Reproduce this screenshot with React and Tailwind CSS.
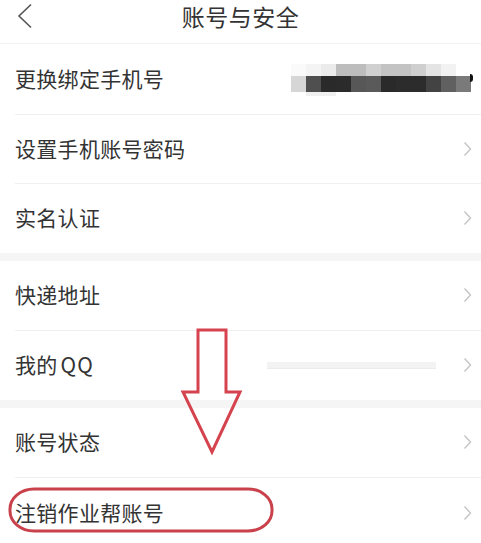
import React from "react";

const Chevron = () => (
  <svg width="9" height="16" viewBox="0 0 9 16" className="shrink-0">
    <path d="M1.5 1.5 L7.5 8 L1.5 14.5" fill="none" stroke="#c4c4c4" strokeWidth="1.4" />
  </svg>
);

const topRow = ["#fafafa", "#f4f4f4", "#ebebeb", "#bdbdbd", "#bdbdbd", "#d0d0d0", "#c3c3c3", "#c3c3c3", "#cfcfcf", "#e4e4e4", "#f2f2f2", "#ffffff"];
const botRow = ["#d6d6d6", "#4f4f4f", "#2a2a2a", "#2b2b2b", "#575757", "#5a5a5a", "#2a2a2a", "#2c2c2c", "#2c2c2c", "#434343", "#606060", "#7a7a7a"];

const Blur = () => (
  <div className="flex flex-col">
    <div className="flex">
      {topRow.map((c, i) => (
        <div key={i} className="w-[15px] h-[12px]" style={{ background: c }} />
      ))}
    </div>
    <div className="flex">
      {botRow.map((c, i) => (
        <div key={i} className="w-[15px] h-[16px]" style={{ background: c }} />
      ))}
    </div>
    <div className="flex">
      <div className="w-[15px] h-[4px]" />
      <div className="w-[30px] h-[4px] bg-[#f0f0f0]" />
    </div>
  </div>
);

const Row = ({ label, border = true, h = "h-[70px]", right = null, chevron = true }) => (
  <div className={`${h} pl-[15px] bg-white`}>
    <div className={`h-full flex items-center pr-[9px] pb-[1px] ${border ? "border-b border-[#f0f0f0]" : ""}`}>
      <span className="text-[21px] text-[#333333] tracking-[0.3px] flex-1">{label}</span>
      {right}
      {chevron && <Chevron />}
    </div>
  </div>
);

export default function App() {
  return (
    <div
      className="relative w-[481px] h-[543px] overflow-hidden bg-white"
      style={{ fontFamily: '"Noto Sans CJK SC", "Noto Sans", sans-serif' }}
    >
      <div className="h-[44px] border-b border-[#f2f2f2] flex items-start relative">
        <svg width="16" height="26" viewBox="0 0 16 26" className="absolute left-[17px] top-[3px]">
          <path d="M14 1.5 L2 13 L14 24.5" fill="none" stroke="#555555" strokeWidth="1.6" />
        </svg>
        <div className="w-full text-center text-[23px] leading-[32px] text-[#333333] tracking-[0.5px]">账号与安全</div>
      </div>
      <Row
        label="更换绑定手机号"
        h="h-[71px]"
        chevron={false}
        right={
          <div className="flex items-center mr-[-1px] mt-[2px]">
            <Blur />
            <div className="w-[3px] h-[8px] bg-[#111] rounded-r-full ml-[-1px] mt-[-4px]" />
          </div>
        }
      />
      <Row label="设置手机账号密码" h="h-[69px]" />
      <Row label="实名认证" border={false} h="h-[69px]" />
      <div className="h-[8px] bg-[#f5f5f5]" />
      <Row label="快递地址" />
      <Row
        label={<>我的<span className="ml-[3px] tracking-[1px]">QQ</span></>}
        border={false}
        h="h-[69px]"
        right={<div className="w-[169px] h-[7px] mr-[27px] bg-[#f3f3f3] border-b border-[#ebebeb]" />}
      />
      <div className="h-[8px] bg-[#f5f5f5]" />
      <Row label="账号状态" />
      <Row label="注销作业帮账号" border={false} />

      <svg width="481" height="543" className="absolute left-0 top-0 pointer-events-none">
        <path
          d="M198 330 L226 330 L226 392 L240 392 L212 452 L183 392 L198 392 Z"
          fill="none"
          stroke="#d5434f"
          strokeWidth="3"
          strokeLinejoin="miter"
        />
        <rect x="10" y="489" width="262" height="42" rx="24" ry="20" fill="none" stroke="#c9414b" strokeWidth="3" />
      </svg>
    </div>
  );
}
